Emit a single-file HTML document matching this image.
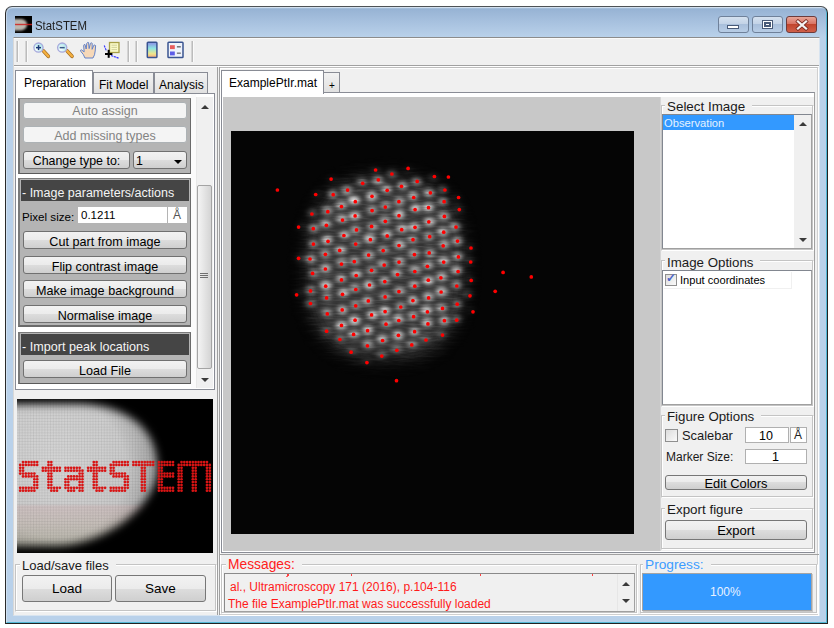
<!DOCTYPE html>
<html><head><meta charset="utf-8">
<style>
*{margin:0;padding:0;box-sizing:border-box}
html,body{width:834px;height:628px;overflow:hidden;background:#fff;font-family:"Liberation Sans",sans-serif;color:#000}
.a{position:absolute}
#win{left:5px;top:6px;width:823px;height:618px;border:1px solid #4e5256;border-left-color:#2a2a2a;border-right-color:#222;border-bottom-color:#222;border-radius:7px 7px 0 0;background:linear-gradient(#c6d8ec 0px,#97b3d4 2px,#a6c0de 14px,#b9d1ea 30px,#b9d1ea 100%);overflow:hidden;box-shadow:inset 1px 1px 0 rgba(255,255,255,0.35), inset -1px -1px 0 #52b8d6}
#client{left:13px;top:37px;width:807px;height:579px;background:#f0f0f0;border:1px solid #8c8c8c;border-left-color:#d8d8d8;border-bottom-color:#d8e4f0;border-right-color:#d8e4f0;box-shadow:inset 0 1px 0 #fafafa}
.t{position:absolute;white-space:nowrap;line-height:1}
.btn{position:absolute;border:1px solid #707070;border-radius:3px;background:linear-gradient(#f2f2f2 0%,#ebebeb 50%,#dddddd 50%,#cfcfcf 100%);text-align:center;white-space:nowrap;font-size:12px;color:#000}
.btn.dis{border-color:#adb2b5;background:#f4f4f4;color:#838383}
.sep{position:absolute;top:41px;width:3px;height:21px;border-left:1px solid #d4d4d4;border-right:1px solid #fafafa;background:#bcbcbc}
.grp{position:absolute;border:1px solid #d5dfe5;border-radius:0}
.gt{position:absolute;background:#f0f0f0;padding:0 7px 0 2px;white-space:nowrap;line-height:1}
</style></head><body>
<div id="win" class="a"></div>
<!-- title -->
<svg class="a" style="left:15px;top:16px" width="17" height="17" viewBox="0 0 17 17"><defs><filter id="ib" x="-50%" y="-50%" width="200%" height="200%"><feGaussianBlur stdDeviation="0.9"/></filter></defs><rect width="17" height="17" fill="#000"/><path d="M-2,3 L5,3 C10,3 12,5.5 12,8.5 C12,12 9,14.5 5,14.5 L-2,14.5 Z" fill="#bdb8b0" filter="url(#ib)"/><rect x="0" y="7.8" width="17" height="1.4" fill="#d02020" opacity="0.85"/></svg>
<div class="t" style="left:35px;top:19px;font-size:12px;color:#1e1e1e;transform:scale(0.95,1.1);transform-origin:0 0">StatSTEM</div>
<!-- window buttons -->
<div class="a" style="left:718px;top:16px;width:31px;height:17px;border:1px solid #6f819a;border-radius:3px;background:linear-gradient(#d5e1ef,#c3d3e7 45%,#a9bfdb 50%,#b8cde6)"></div>
<div class="a" style="left:727px;top:25px;width:12px;height:4px;background:#fff;border:1px solid #485a78"></div>
<div class="a" style="left:752px;top:16px;width:31px;height:17px;border:1px solid #6f819a;border-radius:3px;background:linear-gradient(#d5e1ef,#c3d3e7 45%,#a9bfdb 50%,#b8cde6)"></div>
<div class="a" style="left:762px;top:20px;width:11px;height:9px;background:#fff;border:1px solid #485a78;box-shadow:inset 0 0 0 1px #fff, inset 0 0 0 3px #485a78"></div>
<div class="a" style="left:786px;top:16px;width:31px;height:17px;border:1px solid #6d3b3b;border-radius:3px;background:linear-gradient(#e8a597,#d97565 45%,#c1452d 50%,#d0604a)"></div>
<svg class="a" style="left:794px;top:19px" width="16" height="12" viewBox="0 0 16 12"><path d="M4,2.5 L12,9.5 M12,2.5 L4,9.5" stroke="#7a2a20" stroke-width="3.8" stroke-linecap="square"/><path d="M4,2.5 L12,9.5 M12,2.5 L4,9.5" stroke="#f4f4f4" stroke-width="2.3" stroke-linecap="square"/></svg>

<div id="client" class="a"></div>
<!-- toolbar -->
<div class="a" style="left:14px;top:65px;width:805px;height:1px;background:#a0a0a0"></div>
<div class="a" style="left:14px;top:66px;width:805px;height:1px;background:#fff"></div>
<div class="a" style="left:219px;top:67px;width:599px;height:548px;border:1px solid #bdbdbd;border-right-color:#d0d0d0;border-bottom-color:#d0d0d0;box-shadow:inset 1px 1px 0 #fff, 1px 1px 0 #fff"></div>
<div class="sep" style="left:16px"></div>
<div class="sep" style="left:25px"></div>
<div class="sep" style="left:127px"></div>
<div class="sep" style="left:135px"></div>
<div class="sep" style="left:191px"></div>
<svg class="a" style="left:28px;top:38px" width="165" height="26" viewBox="28 38 165 26">
<defs>
<radialGradient id="lens" cx="0.35" cy="0.65" r="0.7"><stop offset="0" stop-color="#ffffff"/><stop offset="0.45" stop-color="#d8f6f6"/><stop offset="1" stop-color="#a8e0e8"/></radialGradient>
<linearGradient id="cbar" x1="0" y1="0" x2="0" y2="1"><stop offset="0" stop-color="#8c8ce6"/><stop offset="0.4" stop-color="#8ee6e0"/><stop offset="0.75" stop-color="#eee68c"/><stop offset="1" stop-color="#f8a880"/></linearGradient>
</defs>
<!-- zoom in -->
<line x1="43.5" y1="51" x2="48.3" y2="56.3" stroke="#a06a20" stroke-width="3.6" stroke-linecap="round"/>
<line x1="43.5" y1="51" x2="48.3" y2="56.3" stroke="#f4b040" stroke-width="2.4" stroke-linecap="round"/>
<circle cx="38.5" cy="47.6" r="4.6" fill="url(#lens)" stroke="#a8a8dc" stroke-width="1.3"/>
<rect x="36" y="46.9" width="5" height="1.5" fill="#1e3a78"/><rect x="37.8" y="45.1" width="1.5" height="5" fill="#1e3a78"/>
<!-- zoom out -->
<line x1="67.2" y1="51" x2="72" y2="56.3" stroke="#a06a20" stroke-width="3.6" stroke-linecap="round"/>
<line x1="67.2" y1="51" x2="72" y2="56.3" stroke="#f4b040" stroke-width="2.4" stroke-linecap="round"/>
<circle cx="62.2" cy="47.6" r="4.6" fill="url(#lens)" stroke="#a8a8dc" stroke-width="1.3"/>
<rect x="59.7" y="46.9" width="5" height="1.5" fill="#3a5a88"/>
<!-- hand -->
<g transform="translate(80,0) scale(1.1,1) translate(-80,0)"><path d="M84.5,58 L83,54.5 L80.6,51.2 Q80,50 81.2,49.8 L83.8,51.8 L83.3,45.5 Q83.5,44.2 84.6,44.6 L85.6,49 L86.2,43.2 Q86.8,42 87.8,42.6 L88.3,48.6 L89.5,43.3 Q90.3,42.4 91.1,43.3 L91,49.3 L92.6,45.2 Q93.6,44.6 94.2,45.6 L93.8,51 Q93.6,55 91.8,58 Z" fill="#f6d8b8" stroke="#5a7cc8" stroke-width="0.9"/></g>
<!-- data cursor -->
<rect x="109.5" y="42.5" width="9.5" height="10" fill="#fafac8" stroke="#a8a048" stroke-width="1.3"/>
<line x1="111.5" y1="45.2" x2="117" y2="45.2" stroke="#c8c890" stroke-width="0.8"/><line x1="111.5" y1="47.4" x2="117" y2="47.4" stroke="#c8c890" stroke-width="0.8"/><line x1="111.5" y1="49.6" x2="117" y2="49.6" stroke="#c8c890" stroke-width="0.8"/>
<path d="M104.2,45.5 L106.5,51" stroke="#3030ff" stroke-width="1.1" stroke-dasharray="2.2 0.7"/>
<path d="M111,55.5 L119,58.3" stroke="#3030ff" stroke-width="1.2" stroke-dasharray="2.2 0.7"/>
<rect x="105" y="53" width="7.4" height="2" fill="#000"/><rect x="107.7" y="49.8" width="2" height="8" fill="#000"/>
<!-- colorbar -->
<rect x="147.3" y="42.3" width="9.6" height="15.2" rx="0.8" fill="url(#cbar)" stroke="#3a5490" stroke-width="1.5"/>
<!-- legend -->
<rect x="168" y="42.3" width="15" height="15.2" rx="0.8" fill="#eef2fb" stroke="#3a5490" stroke-width="1.5"/>
<rect x="170" y="45.2" width="4.8" height="3.9" fill="#e85c5c"/><rect x="176.9" y="46.3" width="3.9" height="1.1" fill="#444"/>
<rect x="170" y="51.5" width="4.8" height="3.9" fill="#5c5ce8"/><rect x="176.9" y="52.6" width="3.9" height="1.1" fill="#555"/>
</svg>

<!-- left tabs -->
<div class="a" style="left:15px;top:93px;width:200px;height:297px;background:#fff;border:1px solid #898c95"></div>
<div class="a" style="left:93px;top:72px;width:61px;height:22px;border:1px solid #898c95;background:linear-gradient(#f2f2f2,#e0e0e0)"></div>
<div class="t" style="left:99px;top:79px;font-size:12px">Fit Model</div>
<div class="a" style="left:154px;top:72px;width:54px;height:22px;border:1px solid #898c95;background:linear-gradient(#f2f2f2,#e0e0e0)"></div>
<div class="t" style="left:159px;top:79px;font-size:12px">Analysis</div>
<div class="a" style="left:15px;top:70px;width:78px;height:24px;border:1px solid #898c95;border-bottom:none;background:#fff"></div>
<div class="t" style="left:24px;top:77px;font-size:12px">Preparation</div>


<!-- left panel contents -->
<div class="a" style="left:191px;top:94px;width:5px;height:294px;background:#fbfbfb"></div>
<div class="a" style="left:196px;top:97px;width:17px;height:291px;background:#f0f0f0;border-left:1px solid #e8e8e8"></div>
<div class="a" style="left:201px;top:105px;width:0;height:0;border-left:4px solid transparent;border-right:4px solid transparent;border-bottom:4px solid #3a3a3a"></div>
<div class="a" style="left:201px;top:378px;width:0;height:0;border-left:4px solid transparent;border-right:4px solid transparent;border-top:4px solid #3a3a3a"></div>
<div class="a" style="left:197px;top:185px;width:15px;height:184px;border:1px solid #a4a4a4;border-radius:2px;background:linear-gradient(90deg,#f4f4f4,#e4e4e4 50%,#d4d4d4)"></div>
<div class="a" style="left:200px;top:273px;width:8px;height:1px;background:#707070"></div>
<div class="a" style="left:200px;top:275px;width:8px;height:1px;background:#707070"></div>
<div class="a" style="left:200px;top:277px;width:8px;height:1px;background:#707070"></div>

<div class="a" style="left:18px;top:98px;width:173px;height:76px;background:#b4b4b4;border-left:2px solid #737373;border-top:1px solid #8c8c8c;border-right:1px solid #6a6a6a;border-bottom:1px solid #5a5a5a"></div>
<div class="btn dis" style="left:23px;top:102px;width:164px;height:17px;line-height:17px;font-size:12.5px">Auto assign</div>
<div class="btn dis" style="left:23px;top:126px;width:164px;height:17px;line-height:18px;font-size:12.5px">Add missing types</div>
<div class="btn" style="left:23px;top:151px;width:107px;height:18px;line-height:18px;font-size:12.4px">Change type to:</div>
<div class="btn" style="left:133px;top:151px;width:54px;height:18px;line-height:18px;font-size:12.4px;text-align:left;padding-left:2px">1</div>
<div class="a" style="left:174px;top:160px;width:0;height:0;border-left:4px solid transparent;border-right:4px solid transparent;border-top:4px solid #000"></div>

<div class="a" style="left:18px;top:178px;width:173px;height:149px;background:#b4b4b4;border-left:2px solid #7a7a7a;border-top:1px solid #7a7a7a;border-right:1px solid #6a6a6a;border-bottom:2px solid #6a6a6a"></div>
<div class="a" style="left:21px;top:180px;width:168px;height:21px;background:#454545"></div>
<div class="t" style="left:22px;top:187px;font-size:12.5px;color:#f4f4f4">- Image parameters/actions</div>
<div class="t" style="left:22px;top:211px;font-size:11.6px">Pixel size:</div>
<div class="a" style="left:78px;top:207px;width:89px;height:16px;background:#fff"></div>
<div class="t" style="left:81px;top:210px;font-size:11.5px">0.1211</div>
<div class="a" style="left:168px;top:207px;width:19px;height:16px;background:#fff"></div>
<div class="t" style="left:173px;top:209px;font-size:12px;color:#555">&#197;</div>
<div class="btn" style="left:23px;top:231px;width:164px;height:18px;line-height:20px;font-size:12.6px">Cut part from image</div>
<div class="btn" style="left:23px;top:256px;width:164px;height:18px;line-height:20px;font-size:12.6px">Flip contrast image</div>
<div class="btn" style="left:23px;top:280px;width:164px;height:18px;line-height:20px;font-size:12.6px">Make image background</div>
<div class="btn" style="left:23px;top:305px;width:164px;height:18px;line-height:20px;font-size:12.6px">Normalise image</div>

<div class="a" style="left:18px;top:332px;width:173px;height:52px;background:#b4b4b4;border-left:2px solid #7a7a7a;border-top:1px solid #7a7a7a;border-right:1px solid #6a6a6a;border-bottom:1px solid #5a5a5a"></div>
<div class="a" style="left:21px;top:334px;width:168px;height:21px;background:#454545"></div>
<div class="t" style="left:22px;top:341px;font-size:12.6px;color:#f4f4f4">- Import peak locations</div>
<div class="btn" style="left:23px;top:360px;width:164px;height:18px;line-height:20px;font-size:12.6px">Load File</div>


<!-- splitter -->
<div class="a" style="left:217px;top:67px;width:1px;height:548px;background:#a0a0a0"></div>
<div class="a" style="left:219px;top:67px;width:1px;height:548px;background:#a0a0a0"></div>

<!-- right tab -->
<div class="a" style="left:221px;top:92px;width:594px;height:461px;background:#fff;border:1px solid #898c95;border-right-color:#a0a0a0"></div>
<div class="a" style="left:323px;top:72px;width:17px;height:21px;border:1px solid #898c95;background:linear-gradient(#f2f2f2,#e0e0e0)"></div>
<div class="t" style="left:329px;top:81px;font-size:10px">+</div>
<div class="a" style="left:221px;top:70px;width:103px;height:24px;border:1px solid #898c95;border-bottom:none;background:#fff"></div>
<div class="t" style="left:229px;top:77px;font-size:12px">ExamplePtIr.mat</div>

<!-- figure area -->
<div class="a" style="left:223px;top:97px;width:438px;height:454px;background:#c8c8c8"></div>
<div class="a" style="left:660px;top:97px;width:154px;height:454px;background:#f0f0f0"></div>
<svg class="a" style="left:231px;top:131px" width="404" height="403" viewBox="231 131 404 403">
<defs>
<filter id="fb1" x="231" y="131" width="404" height="403" filterUnits="userSpaceOnUse"><feGaussianBlur stdDeviation="2.7 2.1" result="bl"/><feTurbulence type="fractalNoise" baseFrequency="0.03 0.5" numOctaves="3" seed="7" result="tn"/><feColorMatrix in="tn" type="matrix" values="0 0 0 0 1  0 0 0 0 1  0 0 0 0 1  0 1.2 0 0 0" result="na"/><feComposite in="bl" in2="na" operator="arithmetic" k1="0.8" k2="0.6" k3="0" k4="0"/></filter>
<filter id="ft2" x="231" y="131" width="403" height="403" filterUnits="userSpaceOnUse"><feTurbulence type="fractalNoise" baseFrequency="0.06 0.5" numOctaves="2" seed="21"/><feColorMatrix type="matrix" values="0 0 0 0 1  0 0 0 0 1  0 0 0 0 1  0 0.9 0 0 -0.35"/></filter>
<filter id="fb2" x="-50%" y="-50%" width="200%" height="200%"><feGaussianBlur stdDeviation="9"/></filter>
<mask id="mk" maskUnits="userSpaceOnUse" x="231" y="131" width="404" height="403"><polygon points="467.0,268.0 466.5,287.8 464.8,301.6 462.2,313.4 458.4,323.7 453.6,332.9 447.8,340.8 441.0,347.5 433.1,353.0 424.2,357.4 414.0,360.5 402.1,362.4 385.0,363.0 367.9,362.4 356.0,360.5 345.8,357.4 336.9,353.0 329.0,347.5 322.2,340.8 316.4,332.9 311.6,323.7 307.8,313.4 305.2,301.6 303.5,287.8 303.0,268.0 303.5,248.2 305.2,234.4 307.8,222.6 311.6,212.3 316.4,203.1 322.2,195.2 329.0,188.5 336.9,183.0 345.8,178.6 356.0,175.5 367.9,173.6 385.0,173.0 402.1,173.6 414.0,175.5 424.2,178.6 433.1,183.0 441.0,188.5 447.8,195.2 453.6,203.1 458.4,212.3 462.2,222.6 464.8,234.4 466.5,248.2" fill="#fff" filter="url(#fb2)"/></mask>
</defs>
<rect x="231" y="131" width="403" height="403" fill="#050505"/>
<g mask="url(#mk)">
<polygon points="467.0,268.0 466.5,287.8 464.8,301.6 462.2,313.4 458.4,323.7 453.6,332.9 447.8,340.8 441.0,347.5 433.1,353.0 424.2,357.4 414.0,360.5 402.1,362.4 385.0,363.0 367.9,362.4 356.0,360.5 345.8,357.4 336.9,353.0 329.0,347.5 322.2,340.8 316.4,332.9 311.6,323.7 307.8,313.4 305.2,301.6 303.5,287.8 303.0,268.0 303.5,248.2 305.2,234.4 307.8,222.6 311.6,212.3 316.4,203.1 322.2,195.2 329.0,188.5 336.9,183.0 345.8,178.6 356.0,175.5 367.9,173.6 385.0,173.0 402.1,173.6 414.0,175.5 424.2,178.6 433.1,183.0 441.0,188.5 447.8,195.2 453.6,203.1 458.4,212.3 462.2,222.6 464.8,234.4 466.5,248.2" fill="#303030" filter="url(#fb2)"/>
<g fill="#ffffff" filter="url(#fb1)"><ellipse cx="330.9" cy="178.4" rx="5.7" ry="4.1" fill-opacity="0.20"/><ellipse cx="315.8" cy="193.1" rx="5.2" ry="4.2" fill-opacity="0.23"/><ellipse cx="332.2" cy="193.5" rx="4.7" ry="4.4" fill-opacity="0.66"/><ellipse cx="346.5" cy="190.3" rx="5.8" ry="4.3" fill-opacity="0.63"/><ellipse cx="361.8" cy="181.5" rx="5.2" ry="3.7" fill-opacity="0.51"/><ellipse cx="374.9" cy="168.3" rx="5.2" ry="4.0" fill-opacity="0.23"/><ellipse cx="391.8" cy="173.5" rx="5.2" ry="4.3" fill-opacity="0.51"/><ellipse cx="377.7" cy="180.0" rx="5.8" ry="4.4" fill-opacity="0.66"/><ellipse cx="386.7" cy="189.0" rx="4.9" ry="3.7" fill-opacity="0.68"/><ellipse cx="371.7" cy="196.2" rx="5.1" ry="4.6" fill-opacity="0.70"/><ellipse cx="354.1" cy="200.3" rx="5.7" ry="4.1" fill-opacity="0.74"/><ellipse cx="341.2" cy="204.9" rx="5.4" ry="4.4" fill-opacity="0.53"/><ellipse cx="326.8" cy="210.6" rx="5.8" ry="4.4" fill-opacity="0.49"/><ellipse cx="311.2" cy="212.4" rx="4.7" ry="4.4" fill-opacity="0.49"/><ellipse cx="372.1" cy="209.7" rx="4.8" ry="4.3" fill-opacity="0.49"/><ellipse cx="385.5" cy="205.5" rx="5.1" ry="3.8" fill-opacity="0.53"/><ellipse cx="399.8" cy="201.5" rx="5.0" ry="4.5" fill-opacity="0.51"/><ellipse cx="354.8" cy="215.8" rx="5.4" ry="3.7" fill-opacity="0.75"/><ellipse cx="341.8" cy="218.8" rx="5.5" ry="3.9" fill-opacity="0.54"/><ellipse cx="325.4" cy="223.7" rx="5.3" ry="3.8" fill-opacity="0.63"/><ellipse cx="312.9" cy="227.8" rx="5.8" ry="4.1" fill-opacity="0.62"/><ellipse cx="299.3" cy="225.7" rx="4.8" ry="4.5" fill-opacity="0.23"/><ellipse cx="384.6" cy="219.9" rx="5.5" ry="4.5" fill-opacity="0.51"/><ellipse cx="372.5" cy="226.4" rx="5.3" ry="4.0" fill-opacity="0.48"/><ellipse cx="355.4" cy="230.0" rx="4.9" ry="4.3" fill-opacity="0.53"/><ellipse cx="344.5" cy="234.9" rx="5.0" ry="3.8" fill-opacity="0.67"/><ellipse cx="327.0" cy="240.0" rx="5.3" ry="4.5" fill-opacity="0.63"/><ellipse cx="312.8" cy="244.1" rx="4.8" ry="3.6" fill-opacity="0.53"/><ellipse cx="387.0" cy="234.2" rx="4.8" ry="4.0" fill-opacity="0.62"/><ellipse cx="369.5" cy="238.6" rx="5.7" ry="4.6" fill-opacity="0.65"/><ellipse cx="356.0" cy="243.5" rx="4.8" ry="3.6" fill-opacity="0.46"/><ellipse cx="340.5" cy="250.0" rx="5.8" ry="3.6" fill-opacity="0.64"/><ellipse cx="325.3" cy="254.0" rx="5.0" ry="4.6" fill-opacity="0.47"/><ellipse cx="310.0" cy="258.7" rx="5.7" ry="4.3" fill-opacity="0.66"/><ellipse cx="299.1" cy="258.3" rx="5.0" ry="4.3" fill-opacity="0.31"/><ellipse cx="399.7" cy="244.5" rx="5.5" ry="4.5" fill-opacity="0.62"/><ellipse cx="383.4" cy="249.6" rx="5.3" ry="4.2" fill-opacity="0.47"/><ellipse cx="368.8" cy="255.3" rx="5.7" ry="4.3" fill-opacity="0.57"/><ellipse cx="354.7" cy="261.0" rx="5.1" ry="4.4" fill-opacity="0.48"/><ellipse cx="342.0" cy="262.4" rx="5.3" ry="4.1" fill-opacity="0.52"/><ellipse cx="325.7" cy="268.2" rx="5.3" ry="4.5" fill-opacity="0.53"/><ellipse cx="383.0" cy="263.9" rx="5.4" ry="3.8" fill-opacity="0.50"/><ellipse cx="399.8" cy="261.6" rx="5.1" ry="4.5" fill-opacity="0.55"/><ellipse cx="399.3" cy="214.3" rx="5.1" ry="4.4" fill-opacity="0.72"/><ellipse cx="408.8" cy="167.4" rx="5.3" ry="3.9" fill-opacity="0.16"/><ellipse cx="434.3" cy="176.4" rx="5.6" ry="4.3" fill-opacity="0.44"/><ellipse cx="447.8" cy="175.5" rx="5.1" ry="3.9" fill-opacity="0.17"/><ellipse cx="416.9" cy="180.9" rx="5.2" ry="3.9" fill-opacity="0.70"/><ellipse cx="402.5" cy="185.4" rx="4.7" ry="3.6" fill-opacity="0.71"/><ellipse cx="429.3" cy="192.4" rx="5.3" ry="3.9" fill-opacity="0.69"/><ellipse cx="443.7" cy="188.5" rx="5.1" ry="3.6" fill-opacity="0.70"/><ellipse cx="413.0" cy="196.0" rx="4.7" ry="4.2" fill-opacity="0.58"/><ellipse cx="458.8" cy="197.0" rx="5.6" ry="4.6" fill-opacity="0.22"/><ellipse cx="443.3" cy="200.9" rx="4.8" ry="3.6" fill-opacity="0.59"/><ellipse cx="415.5" cy="208.2" rx="4.9" ry="3.9" fill-opacity="0.66"/><ellipse cx="428.4" cy="207.1" rx="5.5" ry="4.0" fill-opacity="0.69"/><ellipse cx="460.1" cy="208.0" rx="5.7" ry="4.3" fill-opacity="0.28"/><ellipse cx="444.2" cy="215.9" rx="5.7" ry="4.0" fill-opacity="0.62"/><ellipse cx="429.5" cy="221.6" rx="5.7" ry="4.1" fill-opacity="0.65"/><ellipse cx="414.3" cy="226.9" rx="5.6" ry="4.2" fill-opacity="0.67"/><ellipse cx="455.3" cy="227.1" rx="5.8" ry="4.6" fill-opacity="0.61"/><ellipse cx="402.2" cy="228.5" rx="5.7" ry="4.5" fill-opacity="0.55"/><ellipse cx="442.7" cy="231.3" rx="5.3" ry="4.4" fill-opacity="0.60"/><ellipse cx="428.6" cy="236.5" rx="4.7" ry="4.4" fill-opacity="0.50"/><ellipse cx="412.5" cy="239.5" rx="4.8" ry="3.7" fill-opacity="0.60"/><ellipse cx="457.9" cy="241.0" rx="5.4" ry="4.5" fill-opacity="0.60"/><ellipse cx="444.1" cy="244.2" rx="4.9" ry="4.1" fill-opacity="0.54"/><ellipse cx="471.4" cy="247.5" rx="5.2" ry="4.4" fill-opacity="0.21"/><ellipse cx="413.9" cy="253.6" rx="5.6" ry="4.5" fill-opacity="0.51"/><ellipse cx="429.9" cy="253.0" rx="5.2" ry="4.2" fill-opacity="0.51"/><ellipse cx="458.4" cy="256.1" rx="5.3" ry="3.6" fill-opacity="0.74"/><ellipse cx="443.6" cy="261.1" rx="5.6" ry="4.2" fill-opacity="0.60"/><ellipse cx="471.0" cy="260.3" rx="5.2" ry="4.0" fill-opacity="0.31"/><ellipse cx="428.2" cy="265.0" rx="5.2" ry="3.7" fill-opacity="0.58"/><ellipse cx="313.2" cy="273.4" rx="5.2" ry="3.9" fill-opacity="0.51"/><ellipse cx="371.8" cy="270.4" rx="4.8" ry="4.4" fill-opacity="0.46"/><ellipse cx="396.7" cy="273.3" rx="5.4" ry="3.9" fill-opacity="0.56"/><ellipse cx="356.4" cy="273.9" rx="5.5" ry="3.7" fill-opacity="0.60"/><ellipse cx="340.9" cy="278.5" rx="5.2" ry="4.0" fill-opacity="0.56"/><ellipse cx="384.5" cy="280.9" rx="4.8" ry="3.8" fill-opacity="0.64"/><ellipse cx="325.9" cy="285.5" rx="5.6" ry="4.2" fill-opacity="0.71"/><ellipse cx="309.8" cy="290.6" rx="5.6" ry="4.5" fill-opacity="0.54"/><ellipse cx="369.0" cy="285.0" rx="4.9" ry="4.6" fill-opacity="0.72"/><ellipse cx="354.9" cy="288.2" rx="5.5" ry="3.9" fill-opacity="0.48"/><ellipse cx="399.5" cy="290.6" rx="5.5" ry="3.7" fill-opacity="0.57"/><ellipse cx="296.9" cy="293.0" rx="4.8" ry="4.3" fill-opacity="0.24"/><ellipse cx="343.4" cy="292.7" rx="5.2" ry="4.4" fill-opacity="0.60"/><ellipse cx="326.9" cy="296.5" rx="4.7" ry="3.7" fill-opacity="0.46"/><ellipse cx="385.1" cy="296.1" rx="5.3" ry="3.7" fill-opacity="0.51"/><ellipse cx="309.7" cy="303.4" rx="5.8" ry="4.5" fill-opacity="0.44"/><ellipse cx="367.2" cy="301.0" rx="5.2" ry="4.4" fill-opacity="0.55"/><ellipse cx="355.5" cy="305.0" rx="5.1" ry="4.2" fill-opacity="0.45"/><ellipse cx="342.5" cy="309.8" rx="4.8" ry="4.1" fill-opacity="0.67"/><ellipse cx="327.0" cy="312.5" rx="4.8" ry="4.1" fill-opacity="0.45"/><ellipse cx="372.4" cy="314.7" rx="5.4" ry="4.5" fill-opacity="0.64"/><ellipse cx="384.8" cy="311.0" rx="5.2" ry="4.6" fill-opacity="0.69"/><ellipse cx="354.5" cy="320.2" rx="5.5" ry="4.4" fill-opacity="0.69"/><ellipse cx="341.2" cy="325.4" rx="5.7" ry="4.3" fill-opacity="0.68"/><ellipse cx="386.5" cy="323.2" rx="5.5" ry="3.7" fill-opacity="0.55"/><ellipse cx="398.6" cy="318.7" rx="5.0" ry="4.2" fill-opacity="0.64"/><ellipse cx="325.9" cy="331.3" rx="5.4" ry="3.9" fill-opacity="0.22"/><ellipse cx="367.7" cy="330.0" rx="5.1" ry="4.6" fill-opacity="0.64"/><ellipse cx="353.9" cy="334.1" rx="5.8" ry="3.6" fill-opacity="0.63"/><ellipse cx="340.3" cy="338.2" rx="5.1" ry="3.7" fill-opacity="0.30"/><ellipse cx="382.2" cy="338.9" rx="4.9" ry="4.5" fill-opacity="0.62"/><ellipse cx="398.3" cy="335.4" rx="5.3" ry="4.6" fill-opacity="0.64"/><ellipse cx="368.0" cy="344.2" rx="5.3" ry="4.4" fill-opacity="0.46"/><ellipse cx="351.9" cy="350.7" rx="5.2" ry="3.8" fill-opacity="0.20"/><ellipse cx="396.9" cy="348.6" rx="5.7" ry="4.0" fill-opacity="0.29"/><ellipse cx="381.9" cy="355.0" rx="4.9" ry="4.3" fill-opacity="0.28"/><ellipse cx="366.3" cy="362.2" rx="5.0" ry="3.6" fill-opacity="0.17"/><ellipse cx="457.0" cy="270.0" rx="5.5" ry="4.0" fill-opacity="0.72"/><ellipse cx="415.2" cy="269.8" rx="5.8" ry="4.5" fill-opacity="0.47"/><ellipse cx="441.7" cy="276.9" rx="5.2" ry="4.6" fill-opacity="0.52"/><ellipse cx="428.3" cy="280.3" rx="5.5" ry="4.1" fill-opacity="0.74"/><ellipse cx="471.8" cy="279.8" rx="4.7" ry="4.2" fill-opacity="0.25"/><ellipse cx="414.0" cy="284.5" rx="5.2" ry="3.7" fill-opacity="0.58"/><ellipse cx="457.1" cy="285.1" rx="4.9" ry="4.2" fill-opacity="0.58"/><ellipse cx="441.6" cy="291.3" rx="5.8" ry="4.6" fill-opacity="0.67"/><ellipse cx="469.3" cy="294.2" rx="5.7" ry="4.4" fill-opacity="0.39"/><ellipse cx="428.2" cy="296.6" rx="5.4" ry="4.2" fill-opacity="0.63"/><ellipse cx="413.1" cy="300.3" rx="4.8" ry="3.8" fill-opacity="0.74"/><ellipse cx="458.0" cy="304.2" rx="4.6" ry="3.7" fill-opacity="0.53"/><ellipse cx="400.5" cy="306.4" rx="4.7" ry="4.1" fill-opacity="0.47"/><ellipse cx="441.5" cy="308.0" rx="5.3" ry="4.2" fill-opacity="0.56"/><ellipse cx="472.9" cy="310.4" rx="5.0" ry="4.3" fill-opacity="0.23"/><ellipse cx="426.4" cy="310.2" rx="5.6" ry="4.2" fill-opacity="0.68"/><ellipse cx="412.9" cy="315.7" rx="4.9" ry="4.4" fill-opacity="0.56"/><ellipse cx="444.6" cy="320.9" rx="5.0" ry="4.1" fill-opacity="0.67"/><ellipse cx="457.5" cy="319.3" rx="5.0" ry="3.7" fill-opacity="0.49"/><ellipse cx="426.9" cy="322.3" rx="5.3" ry="4.1" fill-opacity="0.66"/><ellipse cx="414.1" cy="331.5" rx="4.7" ry="3.8" fill-opacity="0.65"/><ellipse cx="441.5" cy="333.9" rx="5.5" ry="4.3" fill-opacity="0.18"/><ellipse cx="425.1" cy="338.9" rx="5.5" ry="4.0" fill-opacity="0.22"/><ellipse cx="412.2" cy="344.2" rx="5.7" ry="4.5" fill-opacity="0.34"/></g>
<rect x="231" y="131" width="403" height="403" filter="url(#ft2)" opacity="0.3"/>
</g>
<g fill="#ff0000"><circle cx="277.4" cy="190.0" r="1.85"/><circle cx="331.1" cy="179.1" r="1.85"/><circle cx="315.7" cy="194.5" r="1.85"/><circle cx="333.2" cy="194.7" r="1.85"/><circle cx="347.6" cy="190.1" r="1.85"/><circle cx="362.7" cy="183.3" r="1.85"/><circle cx="375.6" cy="170.0" r="1.85"/><circle cx="391.9" cy="174.0" r="1.85"/><circle cx="378.3" cy="179.8" r="1.85"/><circle cx="387.2" cy="190.3" r="1.85"/><circle cx="372.0" cy="196.3" r="1.85"/><circle cx="355.3" cy="201.7" r="1.85"/><circle cx="341.5" cy="206.6" r="1.85"/><circle cx="327.8" cy="211.7" r="1.85"/><circle cx="311.9" cy="214.0" r="1.85"/><circle cx="372.1" cy="210.6" r="1.85"/><circle cx="385.3" cy="207.1" r="1.85"/><circle cx="398.9" cy="201.7" r="1.85"/><circle cx="355.1" cy="215.9" r="1.85"/><circle cx="342.5" cy="220.1" r="1.85"/><circle cx="326.4" cy="225.3" r="1.85"/><circle cx="313.3" cy="228.7" r="1.85"/><circle cx="298.6" cy="227.1" r="1.85"/><circle cx="385.3" cy="221.3" r="1.85"/><circle cx="371.6" cy="226.4" r="1.85"/><circle cx="356.5" cy="229.9" r="1.85"/><circle cx="343.9" cy="235.5" r="1.85"/><circle cx="328.0" cy="241.3" r="1.85"/><circle cx="313.4" cy="244.1" r="1.85"/><circle cx="387.2" cy="235.9" r="1.85"/><circle cx="370.4" cy="239.7" r="1.85"/><circle cx="355.7" cy="244.1" r="1.85"/><circle cx="339.7" cy="250.4" r="1.85"/><circle cx="325.4" cy="254.3" r="1.85"/><circle cx="310.0" cy="259.0" r="1.85"/><circle cx="298.6" cy="258.3" r="1.85"/><circle cx="399.0" cy="245.5" r="1.85"/><circle cx="383.2" cy="250.6" r="1.85"/><circle cx="368.6" cy="255.1" r="1.85"/><circle cx="354.3" cy="261.6" r="1.85"/><circle cx="341.5" cy="264.1" r="1.85"/><circle cx="325.4" cy="269.0" r="1.85"/><circle cx="384.2" cy="265.1" r="1.85"/><circle cx="399.0" cy="262.1" r="1.85"/><circle cx="399.0" cy="215.7" r="1.85"/><circle cx="408.1" cy="168.4" r="1.85"/><circle cx="434.4" cy="176.5" r="1.85"/><circle cx="448.4" cy="177.0" r="1.85"/><circle cx="417.2" cy="181.4" r="1.85"/><circle cx="401.5" cy="186.3" r="1.85"/><circle cx="430.4" cy="192.8" r="1.85"/><circle cx="444.9" cy="190.0" r="1.85"/><circle cx="413.7" cy="197.5" r="1.85"/><circle cx="458.6" cy="197.5" r="1.85"/><circle cx="444.1" cy="201.7" r="1.85"/><circle cx="415.1" cy="209.6" r="1.85"/><circle cx="428.5" cy="207.7" r="1.85"/><circle cx="459.3" cy="209.6" r="1.85"/><circle cx="444.4" cy="216.4" r="1.85"/><circle cx="428.8" cy="221.8" r="1.85"/><circle cx="415.0" cy="227.3" r="1.85"/><circle cx="456.0" cy="227.1" r="1.85"/><circle cx="401.7" cy="229.7" r="1.85"/><circle cx="443.7" cy="232.2" r="1.85"/><circle cx="429.7" cy="236.7" r="1.85"/><circle cx="413.0" cy="239.7" r="1.85"/><circle cx="457.5" cy="241.1" r="1.85"/><circle cx="443.2" cy="245.8" r="1.85"/><circle cx="471.0" cy="248.0" r="1.85"/><circle cx="414.4" cy="254.6" r="1.85"/><circle cx="429.2" cy="252.9" r="1.85"/><circle cx="458.4" cy="256.9" r="1.85"/><circle cx="443.7" cy="262.1" r="1.85"/><circle cx="470.7" cy="262.0" r="1.85"/><circle cx="427.4" cy="266.3" r="1.85"/><circle cx="312.6" cy="273.4" r="1.85"/><circle cx="371.6" cy="270.3" r="1.85"/><circle cx="397.5" cy="274.6" r="1.85"/><circle cx="356.2" cy="275.5" r="1.85"/><circle cx="341.5" cy="279.9" r="1.85"/><circle cx="384.8" cy="281.6" r="1.85"/><circle cx="325.7" cy="286.2" r="1.85"/><circle cx="310.5" cy="290.9" r="1.85"/><circle cx="369.5" cy="285.0" r="1.85"/><circle cx="355.8" cy="289.5" r="1.85"/><circle cx="398.9" cy="291.6" r="1.85"/><circle cx="296.6" cy="294.8" r="1.85"/><circle cx="342.5" cy="294.3" r="1.85"/><circle cx="326.6" cy="297.9" r="1.85"/><circle cx="385.1" cy="296.9" r="1.85"/><circle cx="310.5" cy="303.5" r="1.85"/><circle cx="368.3" cy="300.9" r="1.85"/><circle cx="355.7" cy="305.8" r="1.85"/><circle cx="342.2" cy="309.9" r="1.85"/><circle cx="327.3" cy="313.9" r="1.85"/><circle cx="371.6" cy="314.9" r="1.85"/><circle cx="385.1" cy="311.6" r="1.85"/><circle cx="355.1" cy="320.2" r="1.85"/><circle cx="341.5" cy="325.4" r="1.85"/><circle cx="386.0" cy="324.2" r="1.85"/><circle cx="398.8" cy="320.5" r="1.85"/><circle cx="326.6" cy="331.2" r="1.85"/><circle cx="367.6" cy="330.7" r="1.85"/><circle cx="353.6" cy="334.4" r="1.85"/><circle cx="339.9" cy="339.5" r="1.85"/><circle cx="382.6" cy="340.5" r="1.85"/><circle cx="398.4" cy="335.3" r="1.85"/><circle cx="367.4" cy="345.8" r="1.85"/><circle cx="351.1" cy="352.2" r="1.85"/><circle cx="396.8" cy="350.3" r="1.85"/><circle cx="381.8" cy="356.1" r="1.85"/><circle cx="366.9" cy="362.6" r="1.85"/><circle cx="458.1" cy="271.5" r="1.85"/><circle cx="503.1" cy="272.4" r="1.85"/><circle cx="414.8" cy="271.5" r="1.85"/><circle cx="440.9" cy="277.8" r="1.85"/><circle cx="428.3" cy="280.2" r="1.85"/><circle cx="471.2" cy="280.4" r="1.85"/><circle cx="414.8" cy="286.2" r="1.85"/><circle cx="456.8" cy="286.0" r="1.85"/><circle cx="495.2" cy="291.3" r="1.85"/><circle cx="441.1" cy="292.0" r="1.85"/><circle cx="470.0" cy="295.8" r="1.85"/><circle cx="428.6" cy="297.9" r="1.85"/><circle cx="412.9" cy="300.6" r="1.85"/><circle cx="457.2" cy="304.2" r="1.85"/><circle cx="400.8" cy="307.0" r="1.85"/><circle cx="442.5" cy="308.4" r="1.85"/><circle cx="473.0" cy="311.8" r="1.85"/><circle cx="427.4" cy="311.8" r="1.85"/><circle cx="413.6" cy="316.7" r="1.85"/><circle cx="444.4" cy="320.7" r="1.85"/><circle cx="456.7" cy="320.2" r="1.85"/><circle cx="427.9" cy="323.9" r="1.85"/><circle cx="414.6" cy="331.7" r="1.85"/><circle cx="442.5" cy="335.1" r="1.85"/><circle cx="426.0" cy="340.0" r="1.85"/><circle cx="411.8" cy="344.9" r="1.85"/><circle cx="531.3" cy="276.9" r="1.85"/><circle cx="396.5" cy="380.7" r="1.85"/></g>
</svg>


<!-- right panel -->
<div class="a" style="left:660px;top:97px;width:1px;height:454px;background:#d6d6d6"></div>

<div class="grp" style="left:661px;top:105px;width:153px;height:146px;border-color:#c4c4c4 #fff #fff #c4c4c4;box-shadow:inset -1px -1px 0 #c4c4c4, inset 1px 1px 0 #fff"></div>
<div class="gt" style="left:665px;top:100px;font-size:13.4px;color:#1a1a1a">Select Image</div>
<div class="a" style="left:662px;top:114px;width:150px;height:135px;background:#fff;border:1px solid #828790;border-right-color:#a0a0a0;border-bottom-color:#a0a0a0"></div>
<div class="a" style="left:663px;top:115px;width:131px;height:15px;background:#3399ff"></div>
<div class="t" style="left:664px;top:118px;font-size:11.2px;color:#e4f2ff">Observation</div>
<div class="a" style="left:794px;top:115px;width:17px;height:133px;background:#f0f0f0"></div>
<div class="a" style="left:799px;top:122px;width:0;height:0;border-left:4px solid transparent;border-right:4px solid transparent;border-bottom:4px solid #3a3a3a"></div>
<div class="a" style="left:799px;top:238px;width:0;height:0;border-left:4px solid transparent;border-right:4px solid transparent;border-top:4px solid #3a3a3a"></div>

<div class="grp" style="left:661px;top:260px;width:153px;height:147px;border-color:#c4c4c4 #fff #fff #c4c4c4;box-shadow:inset -1px -1px 0 #c4c4c4, inset 1px 1px 0 #fff"></div>
<div class="gt" style="left:665px;top:256px;font-size:13.3px;color:#1a1a1a">Image Options</div>
<div class="a" style="left:662px;top:270px;width:150px;height:135px;background:#fff;border:1px solid #828790;border-right-color:#a0a0a0;border-bottom-color:#a0a0a0"></div>
<div class="a" style="left:664px;top:272px;width:128px;height:17px;border:1px solid #f0f0f0;border-top:none;border-left:none"></div>
<div class="a" style="left:665px;top:274px;width:12px;height:12px;border:1px solid #8f8f8f;background:linear-gradient(135deg,#dcdcdc,#fafafa)"></div>
<div class="t" style="left:666px;top:272px;font-size:12px;font-weight:bold;color:#4a64c8">&#10003;</div>
<div class="t" style="left:680px;top:275px;font-size:11.1px;color:#000">Input coordinates</div>

<div class="grp" style="left:661px;top:415px;width:153px;height:83px;border-color:#c4c4c4 #fff #fff #c4c4c4;box-shadow:inset -1px -1px 0 #c4c4c4, inset 1px 1px 0 #fff"></div>
<div class="gt" style="left:665px;top:410px;font-size:13.3px;color:#1a1a1a">Figure Options</div>
<div class="a" style="left:665px;top:429px;width:13px;height:13px;border:1px solid #8f8f8f;background:linear-gradient(135deg,#dcdcdc,#fafafa)"></div>
<div class="t" style="left:682px;top:430px;font-size:12.9px;color:#1a1a1a">Scalebar</div>
<div class="a" style="left:745px;top:427px;width:44px;height:16px;background:#fff;border:1px solid #b0b0b0"></div>
<div class="t" style="left:759px;top:430px;font-size:12.5px">10</div>
<div class="a" style="left:790px;top:427px;width:17px;height:16px;background:#fff;border:1px solid #b0b0b0"></div>
<div class="t" style="left:794px;top:429px;font-size:12px;color:#222">&#197;</div>
<div class="t" style="left:666px;top:451px;font-size:12px;color:#1a1a1a">Marker Size:</div>
<div class="a" style="left:745px;top:449px;width:62px;height:15px;background:#fff;border:1px solid #b0b0b0"></div>
<div class="t" style="left:772px;top:451px;font-size:12.5px">1</div>
<div class="btn" style="left:665px;top:475px;width:142px;height:15px;line-height:15px;font-size:12.9px;border-color:#777">Edit Colors</div>

<div class="grp" style="left:661px;top:508px;width:153px;height:42px;border-color:#c4c4c4 #fff #fff #c4c4c4;box-shadow:inset -1px -1px 0 #c4c4c4, inset 1px 1px 0 #fff"></div>
<div class="gt" style="left:665px;top:503px;font-size:13.4px;color:#1a1a1a">Export figure</div>
<div class="btn" style="left:665px;top:520px;width:142px;height:20px;line-height:20px;font-size:13px;border-color:#777">Export</div>


<!-- bottom -->
<div class="a" style="left:220px;top:554px;width:599px;height:1px;background:#a0a0a0"></div>
<div class="grp" style="left:221px;top:564px;width:417px;height:50px;border-color:#c4c4c4 #fff #fff #c4c4c4;box-shadow:inset -1px -1px 0 #c4c4c4, inset 1px 1px 0 #fff"></div>
<div class="gt" style="left:226px;top:558px;font-size:13.8px;color:#ff2020">Messages:</div>
<div class="a" style="left:224px;top:573px;width:411px;height:39px;background:#f0f0f0;border:1px solid #a0a0a0;border-top-color:#8a8a8a;border-left-color:#8a8a8a"></div>
<div class="a" style="left:617px;top:574px;width:17px;height:37px;background:#f0f0f0;border-left:1px solid #e6e6e6"></div>
<div class="a" style="left:622px;top:582px;width:0;height:0;border-left:4px solid transparent;border-right:4px solid transparent;border-bottom:4px solid #3a3a3a"></div>
<div class="a" style="left:622px;top:599px;width:0;height:0;border-left:4px solid transparent;border-right:4px solid transparent;border-top:4px solid #3a3a3a"></div>
<div class="a" style="left:287px;top:574px;width:2px;height:2px;background:#ff4040"></div><div class="a" style="left:286px;top:576px;width:2px;height:1px;background:#ff6060"></div><div class="a" style="left:351px;top:574px;width:1px;height:2px;background:#ff4040"></div><div class="a" style="left:480px;top:574px;width:1px;height:2px;background:#ff4040"></div><div class="a" style="left:592px;top:574px;width:1px;height:2px;background:#ff4040"></div>
<div class="t" style="left:230px;top:581px;font-size:12px;color:#ff1a1a">al., Ultramicroscopy 171 (2016), p.104-116</div>
<div class="t" style="left:228px;top:598px;font-size:12px;color:#ff1a1a">The file ExamplePtIr.mat was successfully loaded</div>
<div class="grp" style="left:640px;top:564px;width:178px;height:50px;border-color:#c4c4c4 #fff #fff #c4c4c4;box-shadow:inset -1px -1px 0 #c4c4c4, inset 1px 1px 0 #fff"></div>
<div class="gt" style="left:643px;top:558px;font-size:13.7px;color:#3d9cff">Progress:</div>
<div class="a" style="left:642px;top:573px;width:170px;height:38px;background:#3399ff;border:1px solid #a4a4a4;box-shadow:1px 1px 0 #c8c8c8"></div>
<div class="t" style="left:710px;top:586px;font-size:12px;color:#e8f2ff">100%</div>

<div class="grp" style="left:15px;top:564px;width:202px;height:48px;border-color:#c4c4c4 #fff #fff #c4c4c4;box-shadow:inset -1px -1px 0 #c4c4c4, inset 1px 1px 0 #fff"></div>
<div class="gt" style="left:20px;top:559px;font-size:13px;color:#1a1a1a">Load/save files</div>
<div class="btn" style="left:22px;top:575px;width:90px;height:27px;line-height:25px;font-size:13.5px;border-color:#777">Load</div>
<div class="btn" style="left:115px;top:575px;width:91px;height:27px;line-height:25px;font-size:13.5px;border-color:#777">Save</div>
<svg class="a" style="left:17px;top:399px" width="196" height="154" viewBox="0 0 196 154">
<defs>
<radialGradient id="lg" gradientUnits="userSpaceOnUse" cx="40" cy="70" r="115">
<stop offset="0" stop-color="#d4d4d4"/><stop offset="0.6" stop-color="#c8c8c8"/><stop offset="0.85" stop-color="#a0a0a0"/><stop offset="1" stop-color="#606060"/>
</radialGradient>
<pattern id="gp" width="2.83" height="2.86" patternUnits="userSpaceOnUse"><rect width="2.83" height="2.86" fill="none"/><rect x="2.0" width="0.83" height="2.86" fill="#000" fill-opacity="0.06"/><rect y="2.0" width="2.83" height="0.86" fill="#000" fill-opacity="0.06"/></pattern>
<linearGradient id="tint" x1="0" y1="0" x2="0" y2="1"><stop offset="0" stop-color="#c09090" stop-opacity="0"/><stop offset="0.68" stop-color="#c09090" stop-opacity="0"/><stop offset="0.7" stop-color="#d0a0a0" stop-opacity="0.25"/><stop offset="1" stop-color="#c0c080" stop-opacity="0.2"/></linearGradient>
</defs>
<clipPath id="ec"><path d="M-10,6 L60,6 C100,6 138,25 139,70 C140,100 95,151 50,152 L-10,152 Z"/></clipPath><filter id="lb" x="-20%" y="-20%" width="140%" height="140%"><feGaussianBlur stdDeviation="4"/></filter>
<linearGradient id="vg" x1="0" y1="0" x2="0" y2="1"><stop offset="0" stop-color="#fff" stop-opacity="0.12"/><stop offset="0.6" stop-color="#fff" stop-opacity="0"/><stop offset="1" stop-color="#000" stop-opacity="0.15"/></linearGradient>
<mask id="lm" maskUnits="userSpaceOnUse" x="0" y="0" width="196" height="154"><path d="M-10,5 L60,5 C104,5 141,25 141,70 C140,105 90,146 40,147 L-10,147 Z" fill="#fff" filter="url(#lb)"/></mask>
<rect width="196" height="154" fill="#000"/>
<g mask="url(#lm)">
<rect width="196" height="154" fill="url(#lg)"/>
<rect width="196" height="154" fill="url(#vg)"/><rect width="196" height="154" fill="url(#tint)"/><rect width="196" height="154" fill="url(#gp)"/>
</g>
<g fill="#d81414"><circle cx="6.03" cy="63.10" r="1.35"/><circle cx="8.86" cy="63.10" r="1.35"/><circle cx="11.69" cy="63.10" r="1.35"/><circle cx="14.52" cy="63.10" r="1.35"/><circle cx="17.35" cy="63.10" r="1.35"/><circle cx="20.18" cy="63.10" r="1.35"/><circle cx="3.20" cy="65.96" r="1.35"/><circle cx="6.03" cy="65.96" r="1.35"/><circle cx="8.86" cy="65.96" r="1.35"/><circle cx="11.69" cy="65.96" r="1.35"/><circle cx="14.52" cy="65.96" r="1.35"/><circle cx="17.35" cy="65.96" r="1.35"/><circle cx="20.18" cy="65.96" r="1.35"/><circle cx="3.20" cy="68.82" r="1.35"/><circle cx="6.03" cy="68.82" r="1.35"/><circle cx="3.20" cy="71.68" r="1.35"/><circle cx="6.03" cy="71.68" r="1.35"/><circle cx="3.20" cy="74.54" r="1.35"/><circle cx="6.03" cy="74.54" r="1.35"/><circle cx="8.86" cy="74.54" r="1.35"/><circle cx="11.69" cy="74.54" r="1.35"/><circle cx="14.52" cy="74.54" r="1.35"/><circle cx="17.35" cy="74.54" r="1.35"/><circle cx="6.03" cy="77.40" r="1.35"/><circle cx="8.86" cy="77.40" r="1.35"/><circle cx="11.69" cy="77.40" r="1.35"/><circle cx="14.52" cy="77.40" r="1.35"/><circle cx="17.35" cy="77.40" r="1.35"/><circle cx="20.18" cy="77.40" r="1.35"/><circle cx="17.35" cy="80.26" r="1.35"/><circle cx="20.18" cy="80.26" r="1.35"/><circle cx="17.35" cy="83.12" r="1.35"/><circle cx="20.18" cy="83.12" r="1.35"/><circle cx="17.35" cy="85.98" r="1.35"/><circle cx="20.18" cy="85.98" r="1.35"/><circle cx="3.20" cy="88.84" r="1.35"/><circle cx="6.03" cy="88.84" r="1.35"/><circle cx="8.86" cy="88.84" r="1.35"/><circle cx="11.69" cy="88.84" r="1.35"/><circle cx="14.52" cy="88.84" r="1.35"/><circle cx="17.35" cy="88.84" r="1.35"/><circle cx="20.18" cy="88.84" r="1.35"/><circle cx="3.20" cy="91.70" r="1.35"/><circle cx="6.03" cy="91.70" r="1.35"/><circle cx="8.86" cy="91.70" r="1.35"/><circle cx="11.69" cy="91.70" r="1.35"/><circle cx="14.52" cy="91.70" r="1.35"/><circle cx="17.35" cy="91.70" r="1.35"/><circle cx="31.50" cy="63.10" r="1.35"/><circle cx="34.33" cy="63.10" r="1.35"/><circle cx="31.50" cy="65.96" r="1.35"/><circle cx="34.33" cy="65.96" r="1.35"/><circle cx="25.84" cy="68.82" r="1.35"/><circle cx="28.67" cy="68.82" r="1.35"/><circle cx="31.50" cy="68.82" r="1.35"/><circle cx="34.33" cy="68.82" r="1.35"/><circle cx="37.16" cy="68.82" r="1.35"/><circle cx="39.99" cy="68.82" r="1.35"/><circle cx="42.82" cy="68.82" r="1.35"/><circle cx="25.84" cy="71.68" r="1.35"/><circle cx="28.67" cy="71.68" r="1.35"/><circle cx="31.50" cy="71.68" r="1.35"/><circle cx="34.33" cy="71.68" r="1.35"/><circle cx="37.16" cy="71.68" r="1.35"/><circle cx="39.99" cy="71.68" r="1.35"/><circle cx="42.82" cy="71.68" r="1.35"/><circle cx="31.50" cy="74.54" r="1.35"/><circle cx="34.33" cy="74.54" r="1.35"/><circle cx="31.50" cy="77.40" r="1.35"/><circle cx="34.33" cy="77.40" r="1.35"/><circle cx="31.50" cy="80.26" r="1.35"/><circle cx="34.33" cy="80.26" r="1.35"/><circle cx="31.50" cy="83.12" r="1.35"/><circle cx="34.33" cy="83.12" r="1.35"/><circle cx="31.50" cy="85.98" r="1.35"/><circle cx="34.33" cy="85.98" r="1.35"/><circle cx="31.50" cy="88.84" r="1.35"/><circle cx="34.33" cy="88.84" r="1.35"/><circle cx="37.16" cy="88.84" r="1.35"/><circle cx="39.99" cy="88.84" r="1.35"/><circle cx="42.82" cy="88.84" r="1.35"/><circle cx="34.33" cy="91.70" r="1.35"/><circle cx="37.16" cy="91.70" r="1.35"/><circle cx="39.99" cy="91.70" r="1.35"/><circle cx="48.48" cy="68.82" r="1.35"/><circle cx="51.31" cy="68.82" r="1.35"/><circle cx="54.14" cy="68.82" r="1.35"/><circle cx="56.97" cy="68.82" r="1.35"/><circle cx="59.80" cy="68.82" r="1.35"/><circle cx="62.63" cy="68.82" r="1.35"/><circle cx="48.48" cy="71.68" r="1.35"/><circle cx="51.31" cy="71.68" r="1.35"/><circle cx="54.14" cy="71.68" r="1.35"/><circle cx="56.97" cy="71.68" r="1.35"/><circle cx="59.80" cy="71.68" r="1.35"/><circle cx="62.63" cy="71.68" r="1.35"/><circle cx="65.46" cy="71.68" r="1.35"/><circle cx="62.63" cy="74.54" r="1.35"/><circle cx="65.46" cy="74.54" r="1.35"/><circle cx="51.31" cy="77.40" r="1.35"/><circle cx="54.14" cy="77.40" r="1.35"/><circle cx="56.97" cy="77.40" r="1.35"/><circle cx="59.80" cy="77.40" r="1.35"/><circle cx="62.63" cy="77.40" r="1.35"/><circle cx="65.46" cy="77.40" r="1.35"/><circle cx="48.48" cy="80.26" r="1.35"/><circle cx="51.31" cy="80.26" r="1.35"/><circle cx="54.14" cy="80.26" r="1.35"/><circle cx="56.97" cy="80.26" r="1.35"/><circle cx="59.80" cy="80.26" r="1.35"/><circle cx="62.63" cy="80.26" r="1.35"/><circle cx="65.46" cy="80.26" r="1.35"/><circle cx="48.48" cy="83.12" r="1.35"/><circle cx="51.31" cy="83.12" r="1.35"/><circle cx="62.63" cy="83.12" r="1.35"/><circle cx="65.46" cy="83.12" r="1.35"/><circle cx="48.48" cy="85.98" r="1.35"/><circle cx="51.31" cy="85.98" r="1.35"/><circle cx="62.63" cy="85.98" r="1.35"/><circle cx="65.46" cy="85.98" r="1.35"/><circle cx="48.48" cy="88.84" r="1.35"/><circle cx="51.31" cy="88.84" r="1.35"/><circle cx="54.14" cy="88.84" r="1.35"/><circle cx="56.97" cy="88.84" r="1.35"/><circle cx="59.80" cy="88.84" r="1.35"/><circle cx="62.63" cy="88.84" r="1.35"/><circle cx="65.46" cy="88.84" r="1.35"/><circle cx="51.31" cy="91.70" r="1.35"/><circle cx="54.14" cy="91.70" r="1.35"/><circle cx="56.97" cy="91.70" r="1.35"/><circle cx="62.63" cy="91.70" r="1.35"/><circle cx="65.46" cy="91.70" r="1.35"/><circle cx="76.78" cy="63.10" r="1.35"/><circle cx="79.61" cy="63.10" r="1.35"/><circle cx="76.78" cy="65.96" r="1.35"/><circle cx="79.61" cy="65.96" r="1.35"/><circle cx="71.12" cy="68.82" r="1.35"/><circle cx="73.95" cy="68.82" r="1.35"/><circle cx="76.78" cy="68.82" r="1.35"/><circle cx="79.61" cy="68.82" r="1.35"/><circle cx="82.44" cy="68.82" r="1.35"/><circle cx="85.27" cy="68.82" r="1.35"/><circle cx="88.10" cy="68.82" r="1.35"/><circle cx="71.12" cy="71.68" r="1.35"/><circle cx="73.95" cy="71.68" r="1.35"/><circle cx="76.78" cy="71.68" r="1.35"/><circle cx="79.61" cy="71.68" r="1.35"/><circle cx="82.44" cy="71.68" r="1.35"/><circle cx="85.27" cy="71.68" r="1.35"/><circle cx="88.10" cy="71.68" r="1.35"/><circle cx="76.78" cy="74.54" r="1.35"/><circle cx="79.61" cy="74.54" r="1.35"/><circle cx="76.78" cy="77.40" r="1.35"/><circle cx="79.61" cy="77.40" r="1.35"/><circle cx="76.78" cy="80.26" r="1.35"/><circle cx="79.61" cy="80.26" r="1.35"/><circle cx="76.78" cy="83.12" r="1.35"/><circle cx="79.61" cy="83.12" r="1.35"/><circle cx="76.78" cy="85.98" r="1.35"/><circle cx="79.61" cy="85.98" r="1.35"/><circle cx="76.78" cy="88.84" r="1.35"/><circle cx="79.61" cy="88.84" r="1.35"/><circle cx="82.44" cy="88.84" r="1.35"/><circle cx="85.27" cy="88.84" r="1.35"/><circle cx="88.10" cy="88.84" r="1.35"/><circle cx="79.61" cy="91.70" r="1.35"/><circle cx="82.44" cy="91.70" r="1.35"/><circle cx="85.27" cy="91.70" r="1.35"/><circle cx="96.59" cy="63.10" r="1.35"/><circle cx="99.42" cy="63.10" r="1.35"/><circle cx="102.25" cy="63.10" r="1.35"/><circle cx="105.08" cy="63.10" r="1.35"/><circle cx="107.91" cy="63.10" r="1.35"/><circle cx="110.74" cy="63.10" r="1.35"/><circle cx="93.76" cy="65.96" r="1.35"/><circle cx="96.59" cy="65.96" r="1.35"/><circle cx="99.42" cy="65.96" r="1.35"/><circle cx="102.25" cy="65.96" r="1.35"/><circle cx="105.08" cy="65.96" r="1.35"/><circle cx="107.91" cy="65.96" r="1.35"/><circle cx="110.74" cy="65.96" r="1.35"/><circle cx="93.76" cy="68.82" r="1.35"/><circle cx="96.59" cy="68.82" r="1.35"/><circle cx="93.76" cy="71.68" r="1.35"/><circle cx="96.59" cy="71.68" r="1.35"/><circle cx="93.76" cy="74.54" r="1.35"/><circle cx="96.59" cy="74.54" r="1.35"/><circle cx="99.42" cy="74.54" r="1.35"/><circle cx="102.25" cy="74.54" r="1.35"/><circle cx="105.08" cy="74.54" r="1.35"/><circle cx="107.91" cy="74.54" r="1.35"/><circle cx="96.59" cy="77.40" r="1.35"/><circle cx="99.42" cy="77.40" r="1.35"/><circle cx="102.25" cy="77.40" r="1.35"/><circle cx="105.08" cy="77.40" r="1.35"/><circle cx="107.91" cy="77.40" r="1.35"/><circle cx="110.74" cy="77.40" r="1.35"/><circle cx="107.91" cy="80.26" r="1.35"/><circle cx="110.74" cy="80.26" r="1.35"/><circle cx="107.91" cy="83.12" r="1.35"/><circle cx="110.74" cy="83.12" r="1.35"/><circle cx="107.91" cy="85.98" r="1.35"/><circle cx="110.74" cy="85.98" r="1.35"/><circle cx="93.76" cy="88.84" r="1.35"/><circle cx="96.59" cy="88.84" r="1.35"/><circle cx="99.42" cy="88.84" r="1.35"/><circle cx="102.25" cy="88.84" r="1.35"/><circle cx="105.08" cy="88.84" r="1.35"/><circle cx="107.91" cy="88.84" r="1.35"/><circle cx="110.74" cy="88.84" r="1.35"/><circle cx="93.76" cy="91.70" r="1.35"/><circle cx="96.59" cy="91.70" r="1.35"/><circle cx="99.42" cy="91.70" r="1.35"/><circle cx="102.25" cy="91.70" r="1.35"/><circle cx="105.08" cy="91.70" r="1.35"/><circle cx="107.91" cy="91.70" r="1.35"/><circle cx="116.40" cy="63.10" r="1.35"/><circle cx="119.23" cy="63.10" r="1.35"/><circle cx="122.06" cy="63.10" r="1.35"/><circle cx="124.89" cy="63.10" r="1.35"/><circle cx="127.72" cy="63.10" r="1.35"/><circle cx="130.55" cy="63.10" r="1.35"/><circle cx="133.38" cy="63.10" r="1.35"/><circle cx="136.21" cy="63.10" r="1.35"/><circle cx="116.40" cy="65.96" r="1.35"/><circle cx="119.23" cy="65.96" r="1.35"/><circle cx="122.06" cy="65.96" r="1.35"/><circle cx="124.89" cy="65.96" r="1.35"/><circle cx="127.72" cy="65.96" r="1.35"/><circle cx="130.55" cy="65.96" r="1.35"/><circle cx="133.38" cy="65.96" r="1.35"/><circle cx="136.21" cy="65.96" r="1.35"/><circle cx="124.89" cy="68.82" r="1.35"/><circle cx="127.72" cy="68.82" r="1.35"/><circle cx="124.89" cy="71.68" r="1.35"/><circle cx="127.72" cy="71.68" r="1.35"/><circle cx="124.89" cy="74.54" r="1.35"/><circle cx="127.72" cy="74.54" r="1.35"/><circle cx="124.89" cy="77.40" r="1.35"/><circle cx="127.72" cy="77.40" r="1.35"/><circle cx="124.89" cy="80.26" r="1.35"/><circle cx="127.72" cy="80.26" r="1.35"/><circle cx="124.89" cy="83.12" r="1.35"/><circle cx="127.72" cy="83.12" r="1.35"/><circle cx="124.89" cy="85.98" r="1.35"/><circle cx="127.72" cy="85.98" r="1.35"/><circle cx="124.89" cy="88.84" r="1.35"/><circle cx="127.72" cy="88.84" r="1.35"/><circle cx="124.89" cy="91.70" r="1.35"/><circle cx="127.72" cy="91.70" r="1.35"/><circle cx="141.87" cy="63.10" r="1.35"/><circle cx="144.70" cy="63.10" r="1.35"/><circle cx="147.53" cy="63.10" r="1.35"/><circle cx="150.36" cy="63.10" r="1.35"/><circle cx="153.19" cy="63.10" r="1.35"/><circle cx="156.02" cy="63.10" r="1.35"/><circle cx="141.87" cy="65.96" r="1.35"/><circle cx="144.70" cy="65.96" r="1.35"/><circle cx="147.53" cy="65.96" r="1.35"/><circle cx="150.36" cy="65.96" r="1.35"/><circle cx="153.19" cy="65.96" r="1.35"/><circle cx="156.02" cy="65.96" r="1.35"/><circle cx="141.87" cy="68.82" r="1.35"/><circle cx="144.70" cy="68.82" r="1.35"/><circle cx="141.87" cy="71.68" r="1.35"/><circle cx="144.70" cy="71.68" r="1.35"/><circle cx="141.87" cy="74.54" r="1.35"/><circle cx="144.70" cy="74.54" r="1.35"/><circle cx="147.53" cy="74.54" r="1.35"/><circle cx="150.36" cy="74.54" r="1.35"/><circle cx="153.19" cy="74.54" r="1.35"/><circle cx="156.02" cy="74.54" r="1.35"/><circle cx="141.87" cy="77.40" r="1.35"/><circle cx="144.70" cy="77.40" r="1.35"/><circle cx="147.53" cy="77.40" r="1.35"/><circle cx="150.36" cy="77.40" r="1.35"/><circle cx="153.19" cy="77.40" r="1.35"/><circle cx="156.02" cy="77.40" r="1.35"/><circle cx="141.87" cy="80.26" r="1.35"/><circle cx="144.70" cy="80.26" r="1.35"/><circle cx="141.87" cy="83.12" r="1.35"/><circle cx="144.70" cy="83.12" r="1.35"/><circle cx="141.87" cy="85.98" r="1.35"/><circle cx="144.70" cy="85.98" r="1.35"/><circle cx="141.87" cy="88.84" r="1.35"/><circle cx="144.70" cy="88.84" r="1.35"/><circle cx="147.53" cy="88.84" r="1.35"/><circle cx="150.36" cy="88.84" r="1.35"/><circle cx="153.19" cy="88.84" r="1.35"/><circle cx="156.02" cy="88.84" r="1.35"/><circle cx="141.87" cy="91.70" r="1.35"/><circle cx="144.70" cy="91.70" r="1.35"/><circle cx="147.53" cy="91.70" r="1.35"/><circle cx="150.36" cy="91.70" r="1.35"/><circle cx="153.19" cy="91.70" r="1.35"/><circle cx="156.02" cy="91.70" r="1.35"/><circle cx="164.51" cy="63.10" r="1.35"/><circle cx="167.34" cy="63.10" r="1.35"/><circle cx="170.17" cy="63.10" r="1.35"/><circle cx="173.00" cy="63.10" r="1.35"/><circle cx="175.83" cy="63.10" r="1.35"/><circle cx="178.66" cy="63.10" r="1.35"/><circle cx="181.49" cy="63.10" r="1.35"/><circle cx="184.32" cy="63.10" r="1.35"/><circle cx="187.15" cy="63.10" r="1.35"/><circle cx="189.98" cy="63.10" r="1.35"/><circle cx="161.68" cy="65.96" r="1.35"/><circle cx="164.51" cy="65.96" r="1.35"/><circle cx="167.34" cy="65.96" r="1.35"/><circle cx="170.17" cy="65.96" r="1.35"/><circle cx="173.00" cy="65.96" r="1.35"/><circle cx="175.83" cy="65.96" r="1.35"/><circle cx="178.66" cy="65.96" r="1.35"/><circle cx="181.49" cy="65.96" r="1.35"/><circle cx="184.32" cy="65.96" r="1.35"/><circle cx="187.15" cy="65.96" r="1.35"/><circle cx="189.98" cy="65.96" r="1.35"/><circle cx="192.81" cy="65.96" r="1.35"/><circle cx="161.68" cy="68.82" r="1.35"/><circle cx="164.51" cy="68.82" r="1.35"/><circle cx="175.83" cy="68.82" r="1.35"/><circle cx="178.66" cy="68.82" r="1.35"/><circle cx="189.98" cy="68.82" r="1.35"/><circle cx="192.81" cy="68.82" r="1.35"/><circle cx="161.68" cy="71.68" r="1.35"/><circle cx="164.51" cy="71.68" r="1.35"/><circle cx="175.83" cy="71.68" r="1.35"/><circle cx="178.66" cy="71.68" r="1.35"/><circle cx="189.98" cy="71.68" r="1.35"/><circle cx="192.81" cy="71.68" r="1.35"/><circle cx="161.68" cy="74.54" r="1.35"/><circle cx="164.51" cy="74.54" r="1.35"/><circle cx="175.83" cy="74.54" r="1.35"/><circle cx="178.66" cy="74.54" r="1.35"/><circle cx="189.98" cy="74.54" r="1.35"/><circle cx="192.81" cy="74.54" r="1.35"/><circle cx="161.68" cy="77.40" r="1.35"/><circle cx="164.51" cy="77.40" r="1.35"/><circle cx="175.83" cy="77.40" r="1.35"/><circle cx="178.66" cy="77.40" r="1.35"/><circle cx="189.98" cy="77.40" r="1.35"/><circle cx="192.81" cy="77.40" r="1.35"/><circle cx="161.68" cy="80.26" r="1.35"/><circle cx="164.51" cy="80.26" r="1.35"/><circle cx="175.83" cy="80.26" r="1.35"/><circle cx="178.66" cy="80.26" r="1.35"/><circle cx="189.98" cy="80.26" r="1.35"/><circle cx="192.81" cy="80.26" r="1.35"/><circle cx="161.68" cy="83.12" r="1.35"/><circle cx="164.51" cy="83.12" r="1.35"/><circle cx="175.83" cy="83.12" r="1.35"/><circle cx="178.66" cy="83.12" r="1.35"/><circle cx="189.98" cy="83.12" r="1.35"/><circle cx="192.81" cy="83.12" r="1.35"/><circle cx="161.68" cy="85.98" r="1.35"/><circle cx="164.51" cy="85.98" r="1.35"/><circle cx="175.83" cy="85.98" r="1.35"/><circle cx="178.66" cy="85.98" r="1.35"/><circle cx="189.98" cy="85.98" r="1.35"/><circle cx="192.81" cy="85.98" r="1.35"/><circle cx="161.68" cy="88.84" r="1.35"/><circle cx="164.51" cy="88.84" r="1.35"/><circle cx="175.83" cy="88.84" r="1.35"/><circle cx="178.66" cy="88.84" r="1.35"/><circle cx="189.98" cy="88.84" r="1.35"/><circle cx="192.81" cy="88.84" r="1.35"/><circle cx="161.68" cy="91.70" r="1.35"/><circle cx="164.51" cy="91.70" r="1.35"/><circle cx="175.83" cy="91.70" r="1.35"/><circle cx="178.66" cy="91.70" r="1.35"/><circle cx="189.98" cy="91.70" r="1.35"/><circle cx="192.81" cy="91.70" r="1.35"/></g>
</svg>

</body></html>
